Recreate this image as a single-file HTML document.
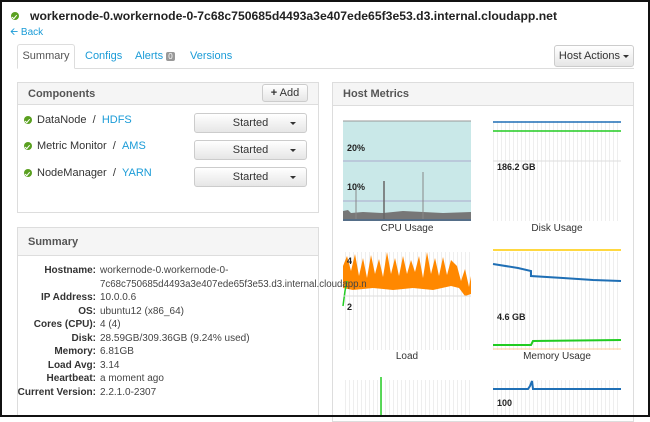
<!DOCTYPE html>
<html><head><meta charset="utf-8"><style>
*{margin:0;padding:0;box-sizing:border-box}
body{width:650px;height:417px;overflow:hidden;background:#fff;font-family:"Liberation Sans",Arial,sans-serif;font-size:11px;color:#333;position:relative}
#frame{position:absolute;left:0;top:0;width:650px;height:417px;border:2px solid #111;pointer-events:none;z-index:10}
.a{position:absolute}
.ok{position:absolute;width:8px;height:8px;border-radius:50%;background:#5aa020}
.ok:after{content:"";position:absolute;left:2px;top:1.5px;width:2px;height:3.5px;border:solid #fff;border-width:0 1.3px 1.3px 0;transform:rotate(40deg)}
.panel{position:absolute;border:1px solid #ddd;background:#fff}
.ph{background:#f5f5f5;border-bottom:1px solid #ddd;font-weight:bold;color:#555;font-size:11px;padding-left:10px}
.btn{position:absolute;border:1px solid #ccc;border-radius:3px;background:linear-gradient(#fff,#e6e6e6);color:#333;font-size:11px;text-align:center}
.caret{display:inline-block;border-left:3px solid transparent;border-right:3px solid transparent;border-top:3px solid #333;vertical-align:middle}
.lnk{color:#1a9bd7}
.row{position:absolute;left:0;width:300px;font-size:10px;line-height:13px}
.row b{position:absolute;right:221px;white-space:nowrap;font-weight:bold;color:#333}
.row span{position:absolute;left:83px;white-space:nowrap;color:#444}
.lbl{position:absolute;font-size:10px;color:#333;text-align:center;width:128px}
</style></head><body>
<div id="frame"></div>
<div class="ok" style="left:11px;top:12px"></div>
<div class="a" style="left:30px;top:9px;font-size:12.2px;font-weight:bold;color:#222">workernode-0.workernode-0-7c68c750685d4493a3e407ede65f3e53.d3.internal.cloudapp.net</div>
<div class="a lnk" style="left:10px;top:25px;font-size:10px">&#129128; Back</div>
<div class="a" style="left:17px;top:68px;width:617px;border-bottom:1px solid #ddd"></div>
<div class="a" style="left:17px;top:44px;width:58px;height:25px;border:1px solid #ddd;border-bottom:1px solid #fff;background:#fff;border-radius:3px 3px 0 0;font-size:11px;color:#555;text-align:center;line-height:23px">Summary</div>
<div class="a lnk" style="left:85px;top:50px">Configs</div>
<div class="a lnk" style="left:135px;top:50px">Alerts <span style="background:#999;color:#fff;font-size:8px;padding:0 2px;border-radius:2px">0</span></div>
<div class="a lnk" style="left:190px;top:50px">Versions</div>
<div class="btn" style="left:554px;top:45px;width:80px;height:22px;line-height:20px">Host Actions <span class="caret"></span></div>
<div class="panel" style="left:17px;top:82px;width:302px;height:131px">
<div class="ph" style="height:22px;line-height:22px">Components</div>
</div>
<div class="btn" style="left:262px;top:84px;width:46px;height:18px;line-height:16px"><b>+</b> Add</div>
<div class="ok" style="left:24px;top:116px"></div>
<div class="a" style="left:37px;top:114px">DataNode &nbsp;/ &nbsp;<span class="lnk">HDFS</span></div>
<div class="ok" style="left:24px;top:142px"></div>
<div class="a" style="left:37px;top:140px">Metric Monitor &nbsp;/ &nbsp;<span class="lnk">AMS</span></div>
<div class="ok" style="left:24px;top:169px"></div>
<div class="a" style="left:37px;top:167px">NodeManager &nbsp;/ &nbsp;<span class="lnk">YARN</span></div>
<div class="btn" style="left:194px;top:113px;width:113px;height:20px;line-height:18px">Started<span class="caret" style="position:absolute;right:10px;top:8px"></span></div>
<div class="btn" style="left:194px;top:140px;width:113px;height:20px;line-height:18px">Started<span class="caret" style="position:absolute;right:10px;top:8px"></span></div>
<div class="btn" style="left:194px;top:167px;width:113px;height:20px;line-height:18px">Started<span class="caret" style="position:absolute;right:10px;top:8px"></span></div>
<div class="panel" style="left:17px;top:227px;width:302px;height:190px">
<div class="ph" style="height:28px;line-height:28px">Summary</div>
</div>
<div class="panel" style="left:332px;top:82px;width:302px;height:340px">
<div class="ph" style="height:23px;line-height:22px">Host Metrics</div>
</div>
<div class="a" style="left:17px;top:264px;z-index:5">
<div class="row" style="top:0"><b>Hostname:</b><span>workernode-0.workernode-0-</span></div>
<div class="row" style="top:13.5px"><span style="font-size:9.7px">7c68c750685d4493a3e407ede65f3e53.d3.internal.cloudapp.n</span></div>
<div class="row" style="top:27px"><b>IP Address:</b><span>10.0.0.6</span></div>
<div class="row" style="top:40.5px"><b>OS:</b><span>ubuntu12 (x86_64)</span></div>
<div class="row" style="top:54px"><b>Cores (CPU):</b><span>4 (4)</span></div>
<div class="row" style="top:67.5px"><b>Disk:</b><span>28.59GB/309.36GB (9.24% used)</span></div>
<div class="row" style="top:81px"><b>Memory:</b><span>6.81GB</span></div>
<div class="row" style="top:94.5px"><b>Load Avg:</b><span>3.14</span></div>
<div class="row" style="top:108px"><b>Heartbeat:</b><span>a moment ago</span></div>
<div class="row" style="top:121.5px"><b>Current Version:</b><span>2.2.1.0-2307</span></div>
</div>
<svg class="a" style="left:333px;top:106px" width="300" height="311">
<defs>
<pattern id="g" width="4" height="10" patternUnits="userSpaceOnUse"><line x1="0.5" y1="0" x2="0.5" y2="10" stroke="#eee" stroke-width="1"/></pattern>
</defs>
<rect x="10" y="15" width="128" height="100" fill="#c9e8e8"/>
<line x1="10" y1="15" x2="138" y2="15" stroke="#999"/>
<line x1="10" y1="55" x2="138" y2="55" stroke="#aac"/>
<line x1="10" y1="95" x2="138" y2="95" stroke="#aac"/>
<path d="M10 115 L10 105 L15 104 L18 107 L30 106 L50 107 L70 105 L90 106 L110 107 L138 106 L138 115Z" fill="#777"/>
<line x1="23" y1="113" x2="23" y2="82" stroke="#888"/>
<line x1="51" y1="113" x2="51" y2="75" stroke="#666" stroke-width="1.5"/>
<line x1="90" y1="113" x2="90" y2="66" stroke="#888"/>
<line x1="10" y1="114" x2="138" y2="114" stroke="#369"/>
<text x="14" y="45" font-size="9" font-weight="bold" font-family="Liberation Sans" fill="#222">20%</text>
<text x="14" y="84" font-size="9" font-weight="bold" font-family="Liberation Sans" fill="#222">10%</text>
<rect x="160" y="15" width="128" height="100" fill="url(#g)"/>
<line x1="160" y1="16" x2="288" y2="16" stroke="#1f6fb5" stroke-width="1.5"/>
<line x1="160" y1="25" x2="288" y2="25" stroke="#2c2" stroke-width="1.5"/>
<line x1="160" y1="55" x2="288" y2="55" stroke="#ddd"/>
<text x="164" y="64" font-size="9" font-weight="bold" font-family="Liberation Sans" fill="#222">186.2 GB</text>
<rect x="10" y="146" width="128" height="98" fill="url(#g)"/>
<path d="M10 160 L14 150 L18 165 L22 148 L26 170 L30 152 L34 172 L38 149 L42 168 L46 153 L50 171 L54 146 L58 168 L62 152 L66 170 L70 150 L74 168 L78 154 L82 166 L86 150 L90 172 L94 146 L98 168 L102 152 L106 170 L110 151 L114 169 L118 154 L124 160 L128 175 L132 163 L136 181 L138 170 L138 188 L132 190 L126 182 L118 180 L100 184 L80 182 L60 184 L40 182 L20 184 L10 182Z" fill="#f80"/>
<path d="M10 200 L12 185 L14 175" stroke="#2c2" stroke-width="1.5" fill="none"/>
<line x1="10" y1="190" x2="138" y2="190" stroke="#ddd"/>
<text x="14" y="158" font-size="9" font-weight="bold" font-family="Liberation Sans" fill="#222">4</text>
<text x="14" y="204" font-size="9" font-weight="bold" font-family="Liberation Sans" fill="#222">2</text>
<rect x="160" y="146" width="128" height="98" fill="url(#g)"/>
<line x1="160" y1="144" x2="288" y2="144" stroke="#fc0" stroke-width="1.5"/>
<path d="M160 158 L185 162 L198 165 L198 170 L230 172 L260 174 L288 175" stroke="#1f6fb5" stroke-width="2" fill="none"/>
<path d="M160 239 L198 239 L200 235 L288 234" stroke="#2c2" stroke-width="2" fill="none"/>
<line x1="160" y1="243" x2="288" y2="243" stroke="#fc9"/>
<text x="164" y="214" font-size="9" font-weight="bold" font-family="Liberation Sans" fill="#222">4.6 GB</text>
<rect x="10" y="274" width="128" height="40" fill="url(#g)"/>
<line x1="48" y1="271" x2="48" y2="311" stroke="#2c2" stroke-width="1.5"/>
<rect x="160" y="274" width="128" height="40" fill="url(#g)"/>
<path d="M160 283 L195 283 L197 280 L199 275 L200 283 L288 283" stroke="#1f6fb5" stroke-width="2" fill="none"/>
<text x="164" y="300" font-size="9" font-weight="bold" font-family="Liberation Sans" fill="#222">100</text>
</svg>
<div class="lbl" style="left:343px;top:223px">CPU Usage</div>
<div class="lbl" style="left:493px;top:223px">Disk Usage</div>
<div class="lbl" style="left:343px;top:351px">Load</div>
<div class="lbl" style="left:493px;top:351px">Memory Usage</div>
</body></html>
